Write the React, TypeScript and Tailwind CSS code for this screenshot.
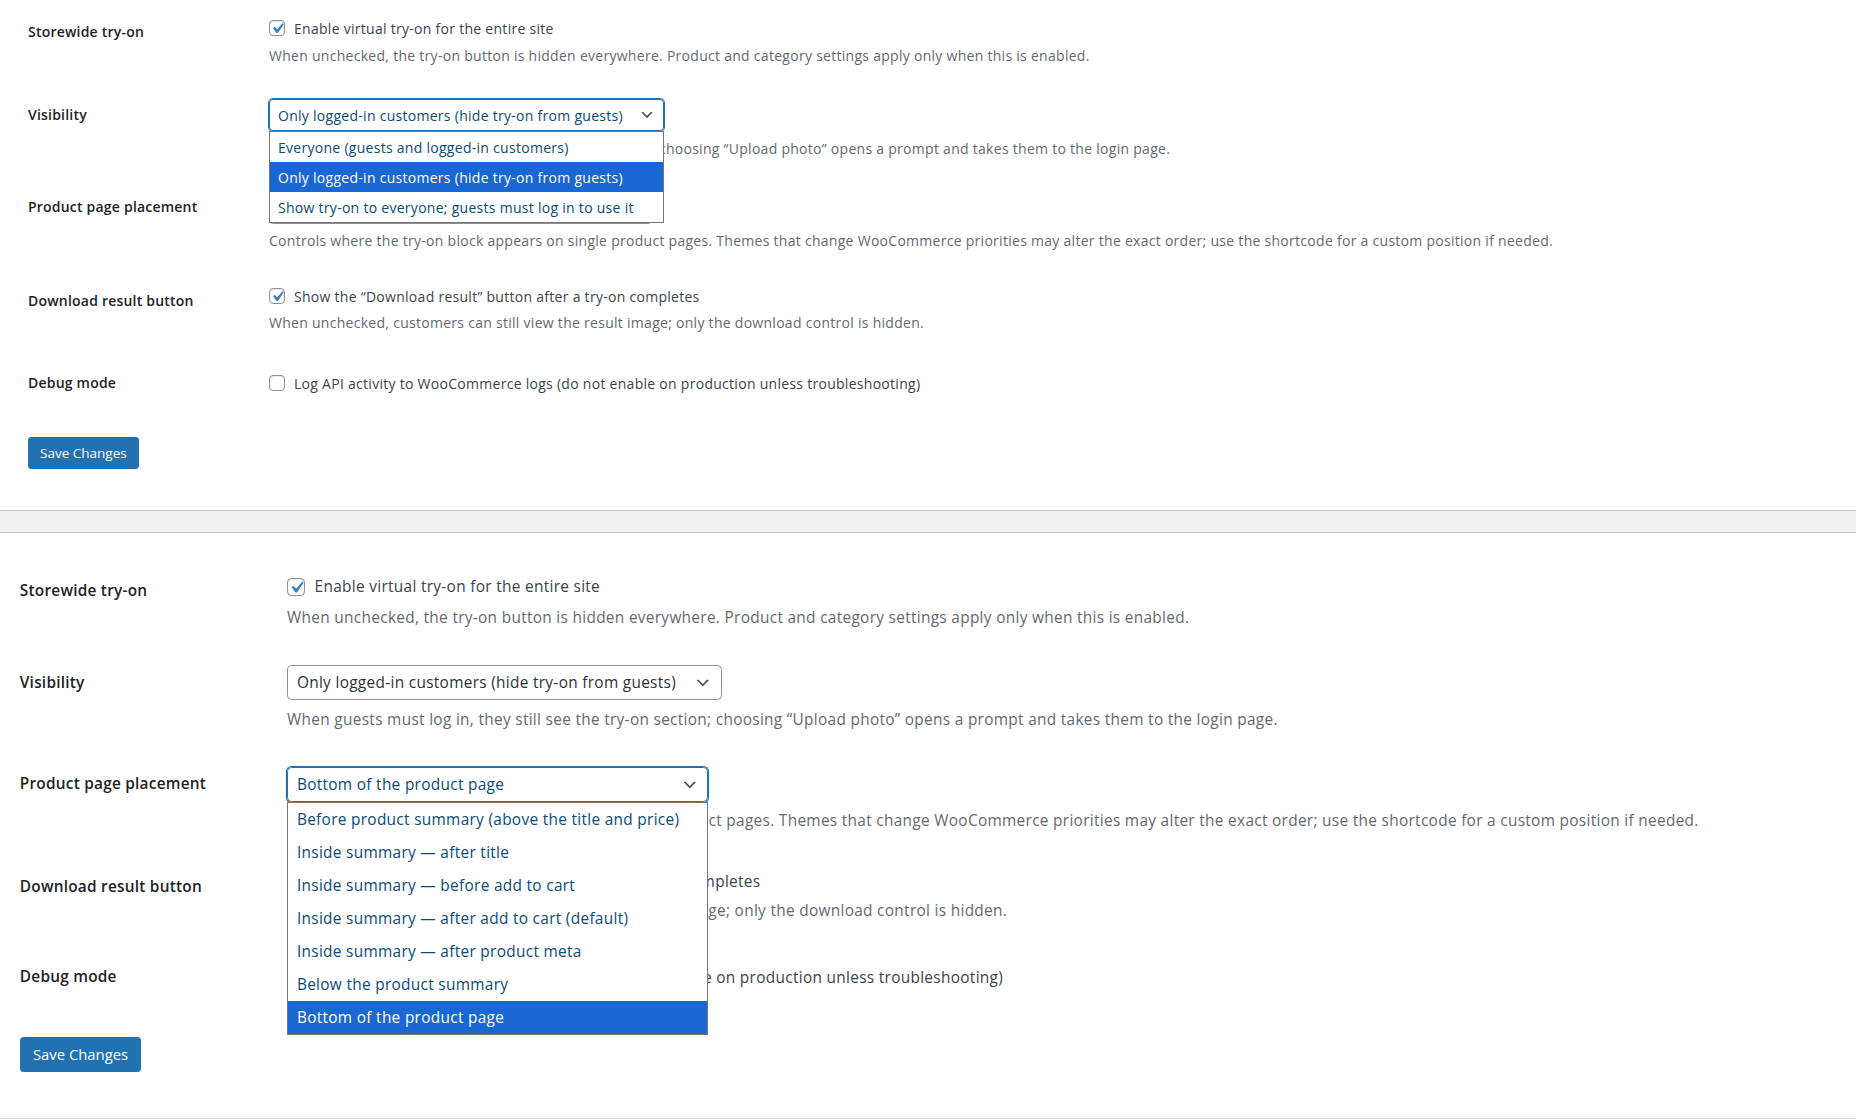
import React from 'react';

const visibilityOptions = [
    'Everyone (guests and logged-in customers)',
    'Only logged-in customers (hide try-on from guests)',
    'Show try-on to everyone; guests must log in to use it'
];

const placementOptions = [
    'Before product summary (above the title and price)',
    'Inside summary — after title',
    'Inside summary — before add to cart',
    'Inside summary — after add to cart (default)',
    'Inside summary — after product meta',
    'Below the product summary',
    'Bottom of the product page'
];

const Chevron = () => (
    <svg
        viewBox="0 0 20 20"
        className="pointer-events-none absolute right-[8px] top-1/2 h-4 w-4 -translate-y-1/2 fill-[#50575e]">
        <path d="M5 6l5 5 5-5 2 1-7 7-7-7 2-1z" />
    </svg>
);

const Checkbox = ({ checked }: { checked?: boolean }) => (
    <span className="relative inline-block h-4 w-4 shrink-0 rounded-[4px] border border-[#8c8f94] bg-white shadow-[inset_0_1px_2px_rgba(0,0,0,0.1)]">
        {checked && (
            <svg
                viewBox="0 0 20 20"
                className="absolute -left-[3px] -top-[3px] h-[21px] w-[21px] fill-[#3582c4]">
                <path d="M14.83 4.89l1.34.94-5.81 8.38H9.02L5.78 9.67l1.34-1.25 2.57 2.4z" />
            </svg>
        )}
    </span>
);

interface SelectProps {
    value: string;
    options: string[];
    open?: boolean;
    width: string;
}

const Select: React.FC<SelectProps> = ({ value, options, open, width }) => (
    <div className={`relative ${width}`}>
        <div
            className={`relative flex h-[32px] items-center rounded-[4px] border pl-[8px] pr-[24px] text-[14px] tracking-[0.02em] ${
                open
                    ? 'border-[#2271b1] text-[#0a4b78] shadow-[0_0_0_1px_#2271b1]'
                    : 'border-[#8c8f94] text-[#2c3338]'
            }`}>
            <span className="truncate">{value}</span>
            <Chevron />
        </div>
        {open && (
            <ul className="absolute left-0 top-full z-10 w-full border border-[#767676] bg-white text-[14px] tracking-[0.02em]">
                {options.map((option) => (
                    <li
                        key={option}
                        className={`flex h-[30px] items-center whitespace-nowrap px-[8px] ${
                            option === value ? 'bg-[#1967d2] text-white' : 'text-[#0a4b78]'
                        }`}>
                        {option}
                    </li>
                ))}
            </ul>
        )}
    </div>
);

const labelClass =
    'shrink-0 text-[14px] font-semibold leading-[20px] tracking-[0.015em] text-[#1d2327]';
const descClass = 'whitespace-nowrap text-[14px] leading-[20px] tracking-[0.02em] text-[#646970]';
const checkLabelClass =
    'flex h-[20px] items-center gap-[9px] whitespace-nowrap text-[14px] tracking-[0.02em] text-[#3c434a]';

interface FormProps {
    open: 'visibility' | 'placement';
    padX: string;
    labelW: string;
}

const SettingsForm: React.FC<FormProps> = ({ open, padX, labelW }) => (
    <div className={padX}>
        <div className="flex">
            <div className={`${labelW} ${labelClass} pt-[22px]`}>Storewide try-on</div>
            <div className="pt-[18px]">
                <label className={checkLabelClass}>
                    <Checkbox checked />
                    Enable virtual try-on for the entire site
                </label>
                <p className={`${descClass} mt-[8px]`}>
                    When unchecked, the try-on button is hidden everywhere. Product and category
                    settings apply only when this is enabled.
                </p>
            </div>
        </div>

        <div className="flex">
            <div className={`${labelW} ${labelClass} pt-[39px]`}>Visibility</div>
            <div className="pt-[33px]">
                <Select
                    width="w-[395px]"
                    value="Only logged-in customers (hide try-on from guests)"
                    options={visibilityOptions}
                    open={open === 'visibility'}
                />
                <p className={`${descClass} mt-[8px]`}>
                    When guests must log in, they still see the try-on section; choosing “Upload
                    photo” opens a prompt and takes them to the login page.
                </p>
            </div>
        </div>

        <div className="flex">
            <div className={`${labelW} ${labelClass} pt-[38px]`}>Product page placement</div>
            <div className="pt-[33px]">
                <Select
                    width="w-[383px]"
                    value="Bottom of the product page"
                    options={placementOptions}
                    open={open === 'placement'}
                />
                <p className={`${descClass} mt-[7px]`}>
                    Controls where the try-on block appears on single product pages. Themes that
                    change WooCommerce priorities may alter the exact order; use the shortcode for a
                    custom position if needed.
                </p>
            </div>
        </div>

        <div className="flex">
            <div className={`${labelW} ${labelClass} pt-[40px]`}>Download result button</div>
            <div className="pt-[35px]">
                <label className={checkLabelClass}>
                    <Checkbox checked />
                    Show the “Download result” button after a try-on completes
                </label>
                <p className={`${descClass} mt-[7px]`}>
                    When unchecked, customers can still view the result image; only the download
                    control is hidden.
                </p>
            </div>
        </div>

        <div className="flex">
            <div className={`${labelW} ${labelClass} pt-[40px]`}>Debug mode</div>
            <div className="pt-[40px]">
                <label className={checkLabelClass}>
                    <Checkbox />
                    Log API activity to WooCommerce logs (do not enable on production unless
                    troubleshooting)
                </label>
            </div>
        </div>

        <button
            type="button"
            className="mt-[44px] h-[32px] rounded-[3px] border border-[#2271b1] bg-[#2271b1] px-[11px] text-[13.5px] text-white">
            Save Changes
        </button>
    </div>
);

export default function App() {
    return (
        <div className="min-h-screen bg-white font-['Open_Sans',sans-serif]">
            <div className="pb-[41px]">
                <SettingsForm open="visibility" padX="pl-[28px]" labelW="w-[241px]" />
            </div>

            <div className="h-[23px] border-y border-[#c3c4c7] bg-[#f0f0f1]" />

            <div className="border-b border-[#dcdcde] pb-[42px] pt-[21px] [zoom:1.1]">
                <SettingsForm open="placement" padX="pl-[18px]" labelW="w-[243px]" />
            </div>
        </div>
    );
}
